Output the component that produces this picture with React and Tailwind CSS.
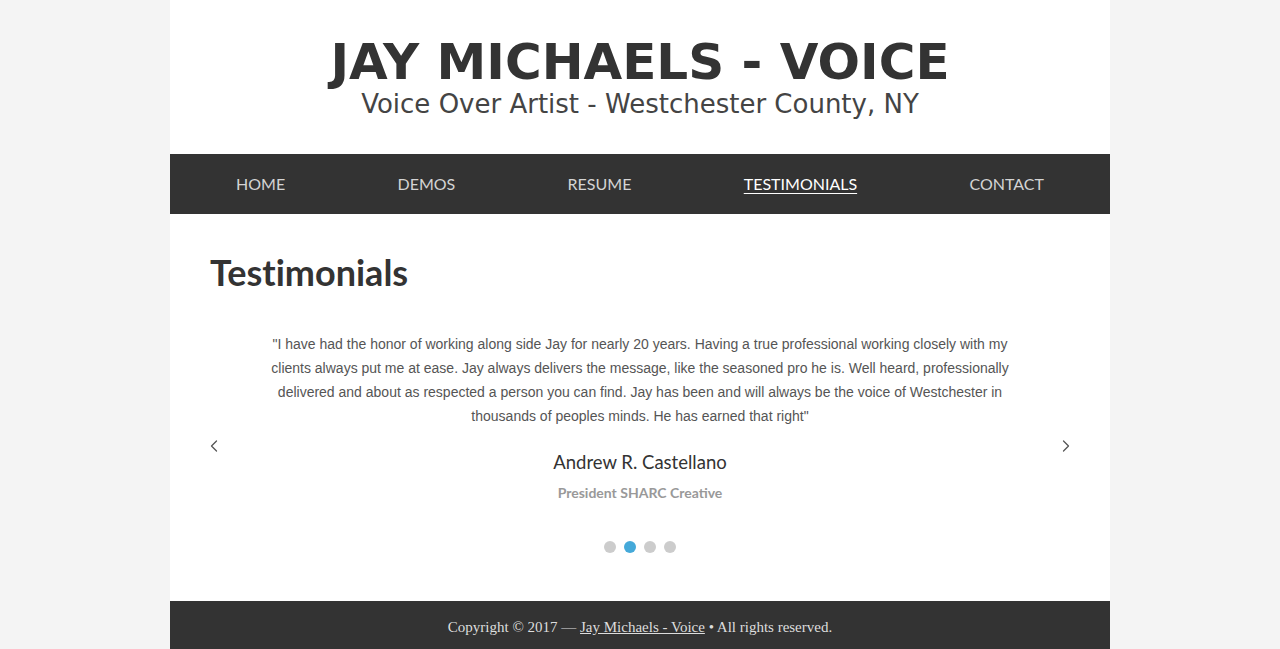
import { ChevronLeft, ChevronRight } from "lucide-react";

const navItems = ["HOME", "DEMOS", "RESUME", "TESTIMONIALS", "CONTACT"];

const App = () => {
  return (
    <div className="min-h-screen bg-[#f4f4f4]">
      <div className="mx-auto w-[940px] bg-white">
        {/* Header */}
        <header className="pt-[34px] pb-[35px] text-center text-[#333]" style={{ fontFamily: "Verdana, 'DejaVu Sans', sans-serif" }}>
          <h1 className="text-[50px] font-bold leading-[56px]">JAY MICHAELS - VOICE</h1>
          <p className="mt-[-1px] text-[26px] leading-[30px] text-[#444]">Voice Over Artist - Westchester County, NY</p>
        </header>

        {/* Nav */}
        <nav className="flex h-[60px] items-center justify-between bg-[#333] px-[66px] font-['Lato',sans-serif] text-[16px] text-[#d4d4d4]">
          {navItems.map((item) => (
            <a
              key={item}
              href="#"
              className={item === "TESTIMONIALS" ? "text-white underline underline-offset-[3px]" : ""}
            >
              {item}
            </a>
          ))}
        </nav>

        {/* Content */}
        <main className="px-[40px] pt-[34px] pb-[48px]">
          <h2 className="font-['Lato',sans-serif] text-[36px] font-bold leading-[48px] text-[#333] [font-variant-ligatures:none]">Testimonials</h2>

          <div className="mt-[36px] flex">
            <button className="mt-[6px] w-[20px] self-center text-[#555]">
              <ChevronLeft className="h-[20px] w-[20px] -ml-[6px]" strokeWidth={1.5} />
            </button>
            <div className="flex-1 px-[40px] text-center">
              <p className="font-['Liberation_Sans',Arial,sans-serif] text-[14px] leading-[24px] text-[#555]">
                "I have had the honor of working along side Jay for nearly 20 years. Having a true professional working closely with my clients always put me at ease. Jay always delivers the message, like the seasoned pro he is. Well heard, professionally delivered and about as respected a person you can find. Jay has been and will always be the voice of Westchester in thousands of peoples minds. He has earned that right"
              </p>
              <p className="mt-[22px] font-['Lato',sans-serif] text-[18.5px] leading-[24px] text-[#333]">Andrew R. Castellano</p>
              <p className="mt-[9px] font-['Lato',sans-serif] text-[14px] font-bold leading-[20px] text-[#999]">President SHARC Creative</p>

              <div className="mt-[38px] flex justify-center gap-[8px]">
                <span className="h-[12px] w-[12px] rounded-full bg-[#ccc]" />
                <span className="h-[12px] w-[12px] rounded-full bg-[#45a9d9]" />
                <span className="h-[12px] w-[12px] rounded-full bg-[#ccc]" />
                <span className="h-[12px] w-[12px] rounded-full bg-[#ccc]" />
              </div>
            </div>
            <button className="mt-[6px] flex w-[20px] justify-end self-center text-[#555]">
              <ChevronRight className="h-[20px] w-[20px] -mr-[6px]" strokeWidth={1.5} />
            </button>
          </div>
        </main>

        {/* Footer */}
        <footer className="flex h-[52px] items-center justify-center bg-[#333] font-['Liberation_Serif','Times_New_Roman',serif] text-[15px] text-[#ddd]">
          <span>
            Copyright © 2017 — <a href="#" className="underline">Jay Michaels - Voice</a> • All rights reserved.
          </span>
        </footer>
      </div>
    </div>
  );
};

export default App;
